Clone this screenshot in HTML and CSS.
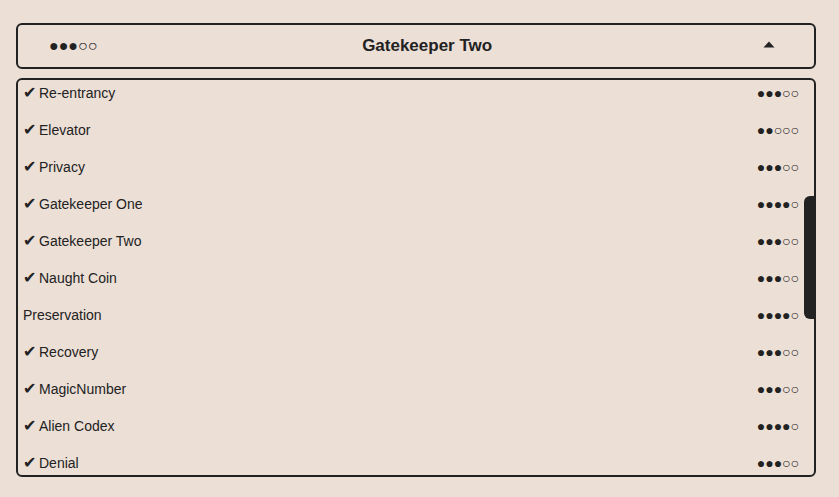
FILE: index.html
```html
<!DOCTYPE html>
<html>
<head>
<meta charset="utf-8">
<link rel="stylesheet" href="styles.css">
</head>
<body>
<div class="app">
  <div class="select">
    <span class="dots dots-lg">●●●○○</span>
    <span class="title">Gatekeeper Two</span>
    <span class="caret"><svg width="12" height="7" viewBox="0 0 12 7"><path d="M6 0.5 L11.5 6.5 L0.5 6.5 Z" fill="#222"/></svg></span>
  </div>
  <div class="list">
    <ul class="rows">
      <li class="row"><span class="name"><span class="check">✔</span>Re-entrancy</span><span class="dots">●●●○○</span></li>
      <li class="row"><span class="name"><span class="check">✔</span>Elevator</span><span class="dots">●●○○○</span></li>
      <li class="row"><span class="name"><span class="check">✔</span>Privacy</span><span class="dots">●●●○○</span></li>
      <li class="row"><span class="name"><span class="check">✔</span>Gatekeeper One</span><span class="dots">●●●●○</span></li>
      <li class="row"><span class="name"><span class="check">✔</span>Gatekeeper Two</span><span class="dots">●●●○○</span></li>
      <li class="row"><span class="name"><span class="check">✔</span>Naught Coin</span><span class="dots">●●●○○</span></li>
      <li class="row"><span class="name">Preservation</span><span class="dots">●●●●○</span></li>
      <li class="row"><span class="name"><span class="check">✔</span>Recovery</span><span class="dots">●●●○○</span></li>
      <li class="row"><span class="name"><span class="check">✔</span>MagicNumber</span><span class="dots">●●●○○</span></li>
      <li class="row"><span class="name"><span class="check">✔</span>Alien Codex</span><span class="dots">●●●●○</span></li>
      <li class="row"><span class="name"><span class="check">✔</span>Denial</span><span class="dots">●●●○○</span></li>
    </ul>
    <div class="thumb"></div>
  </div>
</div>
</body>
</html>
```
FILE: styles.css
```css
html, body {
  margin: 0;
  padding: 0;
  background: #ecdfd6;
  color: #222;
  font-family: "Liberation Sans", Arial, sans-serif;
}
.app {
  width: 800px;
  padding: 23px 0 0 16px;
  display: flex;
  flex-direction: column;
  gap: 9px;
}
.select {
  box-sizing: border-box;
  height: 46px;
  border: 2px solid #222;
  border-radius: 6px;
  display: flex;
  align-items: center;
  justify-content: space-between;
  padding: 0 39px 0 31px;
}
.dots {
  font-family: "Liberation Sans", Arial, sans-serif;
  font-size: 14px;
  white-space: nowrap;
}
.dots-lg {
  font-size: 16px;
}
.title {
  font-size: 17px;
  font-weight: bold;
  margin-right: 6px;
}
.caret {
  display: flex;
  margin-top: -3px;
}
.list {
  position: relative;
  box-sizing: border-box;
  height: 399px;
  border: 2px solid #222;
  border-radius: 6px;
  overflow: hidden;
}
.rows {
  list-style: none;
  margin: -6px 0 0 0;
  padding: 0;
}
.row {
  height: 37px;
  display: flex;
  align-items: center;
  justify-content: space-between;
  padding: 0 15px 0 5px;
  font-size: 14px;
}
.name {
  display: flex;
  align-items: center;
}
.check {
  display: inline-block;
  width: 16px;
  font-family: "DejaVu Sans", sans-serif;
  font-size: 16px;
  line-height: 16px;
}
.thumb {
  position: absolute;
  right: 0;
  top: 116px;
  width: 10px;
  height: 123px;
  background: #222;
  border-radius: 6px 0 0 6px;
}
```
